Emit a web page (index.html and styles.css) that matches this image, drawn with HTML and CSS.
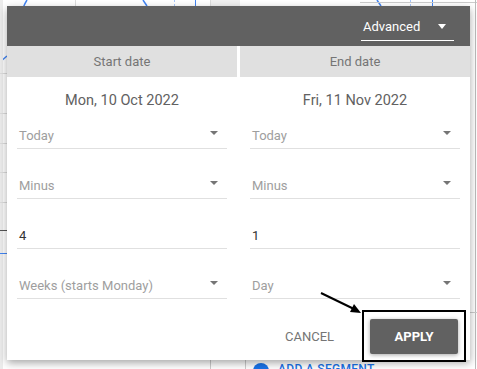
FILE: index.html
```html
<!DOCTYPE html>
<html>
<head>
<meta charset="utf-8">
<link rel="stylesheet" href="styles.css">
</head>
<body>
<div class="page">
  <svg class="backdrop" width="477" height="369" viewBox="0 0 477 369">
    <path d="M23 8 Q25 3 27 0" fill="none" stroke="#4285f4" stroke-width="1.5"/>
    <path d="M0 62 L7 56" fill="none" stroke="#4285f4" stroke-width="1.5"/>
    <line x1="75.5" y1="0" x2="75.5" y2="6" stroke="#ddd"/>
    <path d="M143 0 L147 6" fill="none" stroke="#4285f4" stroke-width="1.5"/>
    <line x1="174.5" y1="0" x2="174.5" y2="6" stroke="#a8c7fa" stroke-dasharray="2 2"/>
    <line x1="195.5" y1="0" x2="195.5" y2="6" stroke="#4285f4"/>
    <line x1="210.5" y1="0" x2="210.5" y2="6" stroke="#ddd"/>
    <rect x="211" y="0" width="29" height="6" fill="#f1f1f1"/>
    <path d="M381 6 Q379 3 377 0" fill="none" stroke="#4285f4" stroke-width="1.5"/>
    <line x1="410.5" y1="0" x2="410.5" y2="6" stroke="#a8c7fa" stroke-dasharray="2 2"/>
    <line x1="432.5" y1="0" x2="432.5" y2="6" stroke="#4285f4"/>
    <line x1="360" y1="2.5" x2="477" y2="2.5" stroke="#ccc"/>
    <line x1="475.5" y1="0" x2="475.5" y2="369" stroke="#bbb"/>
    <rect x="0" y="0" width="3" height="369" fill="#ececec"/>
    <line x1="0" y1="73.5" x2="7" y2="73.5" stroke="#ddd"/>
    <line x1="0" y1="113.5" x2="7" y2="113.5" stroke="#ddd"/>
    <line x1="0" y1="143.5" x2="7" y2="143.5" stroke="#ddd"/>
    <line x1="0" y1="172.5" x2="7" y2="172.5" stroke="#ddd"/>
    <line x1="0" y1="202.5" x2="7" y2="202.5" stroke="#ddd"/>
    <line x1="0" y1="230.5" x2="7" y2="230.5" stroke="#555"/>
    <line x1="0" y1="253.5" x2="7" y2="253.5" stroke="#4285f4"/>
    <line x1="470" y1="312.5" x2="477" y2="312.5" stroke="#ccc"/>
    <line x1="210.5" y1="360" x2="210.5" y2="369" stroke="#ccc"/>
    <line x1="245.5" y1="360" x2="245.5" y2="369" stroke="#ccc"/>
    <circle cx="261" cy="371" r="8" fill="#1a73e8"/>
  </svg>
  <div class="segment-link">ADD A SEGMENT</div>

  <div class="dialog">
    <div class="dialog-header">
      <div class="mode-select">
        <span class="mode-label">Advanced</span>
        <span class="caret caret-white"></span>
      </div>
    </div>
    <div class="columns">
      <div class="column">
        <div class="column-title">Start date</div>
        <div class="column-date">Mon, 10 Oct 2022</div>
        <div class="fields">
          <div class="field"><span class="value muted">Today</span><span class="caret"></span></div>
          <div class="field"><span class="value muted">Minus</span><span class="caret"></span></div>
          <div class="field"><span class="value">4</span></div>
          <div class="field"><span class="value muted">Weeks (starts Monday)</span><span class="caret"></span></div>
        </div>
      </div>
      <div class="column">
        <div class="column-title">End date</div>
        <div class="column-date">Fri, 11 Nov 2022</div>
        <div class="fields">
          <div class="field"><span class="value muted">Today</span><span class="caret"></span></div>
          <div class="field"><span class="value muted">Minus</span><span class="caret"></span></div>
          <div class="field"><span class="value">1</span></div>
          <div class="field"><span class="value muted">Day</span><span class="caret"></span></div>
        </div>
      </div>
    </div>
    <div class="dialog-actions">
      <button class="btn btn-text">CANCEL</button>
      <button class="btn btn-primary">APPLY</button>
    </div>
  </div>

  <div class="highlight-box"></div>
  <svg class="arrow" width="477" height="369" viewBox="0 0 477 369">
    <line x1="321" y1="293" x2="354" y2="309" stroke="#000" stroke-width="2"/>
    <polygon points="361,313 350,312 354,304" fill="#000"/>
  </svg>
</div>
</body>
</html>
```

FILE: styles.css
```css
html, body {
  margin: 0;
  padding: 0;
  background: #fff;
  font-family: Roboto, "Liberation Sans", sans-serif;
}

.page {
  position: relative;
  width: 477px;
  height: 369px;
  overflow: hidden;
  background: #fff;
}

.backdrop {
  position: absolute;
  left: 0;
  top: 0;
}

.segment-link {
  position: absolute;
  left: 278px;
  top: 362px;
  font-size: 12px;
  line-height: 14px;
  font-weight: 500;
  color: #1a73e8;
  letter-spacing: 0.3px;
}

.dialog {
  position: absolute;
  left: 7px;
  top: 6px;
  width: 463px;
  height: 354px;
  background: #fff;
  box-shadow: 0 3px 8px rgba(0, 0, 0, 0.35);
  display: flex;
  flex-direction: column;
}

.dialog-header {
  height: 40px;
  background: #616161;
  display: flex;
  justify-content: flex-end;
  padding-right: 16px;
}

.mode-select {
  width: 93px;
  height: 35px;
  padding-top: 11px;
  box-sizing: border-box;
  border-bottom: 1px solid #fff;
  display: flex;
  align-items: flex-start;
  justify-content: space-between;
  padding-left: 2px;
  padding-right: 8px;
}

.mode-label {
  color: #fff;
  font-size: 13px;
  line-height: 20px;
}

.caret {
  width: 0;
  height: 0;
  border-left: 4px solid transparent;
  border-right: 4px solid transparent;
  border-top: 4px solid #757575;
  margin-bottom: 11px;
}

.caret-white {
  border-left-width: 4.5px;
  border-right-width: 4.5px;
  border-top: 5px solid #fff;
  margin: 7px 0 0 0;
}

.columns {
  display: grid;
  grid-template-columns: 230px 230px;
  column-gap: 3px;
}

.column-title {
  height: 31px;
  background: #e0e0e0;
  color: #757575;
  font-size: 13px;
  line-height: 31px;
  text-align: center;
}

.column-date {
  padding-top: 15px;
  height: 17px;
  line-height: 18px;
  font-size: 14.5px;
  color: #616161;
  text-align: center;
}

.fields {
  display: flex;
  flex-direction: column;
  gap: 10px;
  padding: 0 10px;
}

.field {
  height: 40px;
  box-sizing: border-box;
  border-bottom: 1px solid #e0e0e0;
  display: flex;
  align-items: flex-end;
  justify-content: space-between;
  padding: 0 9px 2px 2px;
}

.value {
  font-size: 13px;
  line-height: 20px;
  color: #333;
}

.value.muted {
  color: #9e9e9e;
}

.dialog-actions {
  display: flex;
  justify-content: flex-end;
  align-items: center;
  gap: 20px;
  padding: 20px 12px 0 0;
}

.btn {
  font-family: Roboto, "Liberation Sans", sans-serif;
  font-size: 13px;
  border: none;
  height: 35px;
  cursor: pointer;
}

.btn-text {
  background: transparent;
  color: #757575;
  padding: 0;
  width: 81px;
}

.btn-primary {
  width: 88px;
  background: #616161;
  color: #fff;
  font-weight: 700;
  border-radius: 2px;
  box-shadow: 0 1px 4px rgba(0, 0, 0, 0.35);
}

.highlight-box {
  position: absolute;
  left: 362px;
  top: 310px;
  width: 100px;
  height: 48px;
  border: 2px solid #000;
}

.arrow {
  position: absolute;
  left: 0;
  top: 0;
  pointer-events: none;
}
```
